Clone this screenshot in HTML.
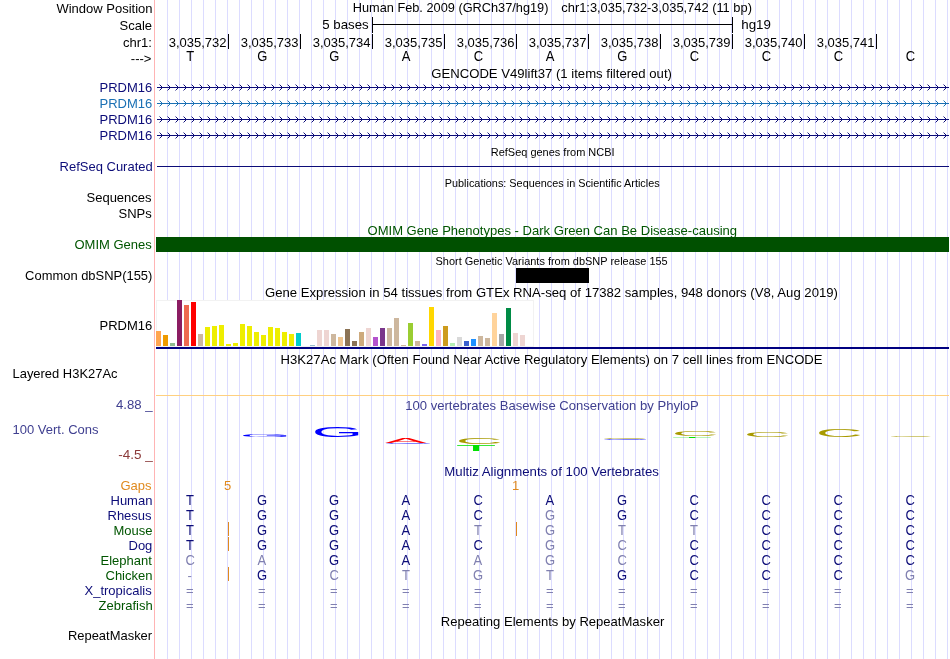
<!DOCTYPE html>
<html><head><meta charset="utf-8"><style>
html,body{margin:0;padding:0;background:#fff;width:950px;height:659px;overflow:hidden}
svg{display:block;will-change:transform;font-family:"Liberation Sans",sans-serif}
</style></head><body>
<svg width="950" height="659" viewBox="0 0 950 659">
<rect x="0" y="0" width="950" height="659" fill="#fff"/>
<rect x="167" y="0" width="1" height="659" fill="#dcdcff"/>
<rect x="179" y="0" width="1" height="659" fill="#dcdcff"/>
<rect x="191" y="0" width="1" height="659" fill="#dcdcff"/>
<rect x="203" y="0" width="1" height="659" fill="#dcdcff"/>
<rect x="215" y="0" width="1" height="659" fill="#dcdcff"/>
<rect x="227" y="0" width="1" height="659" fill="#dcdcff"/>
<rect x="239" y="0" width="1" height="659" fill="#dcdcff"/>
<rect x="251" y="0" width="1" height="659" fill="#dcdcff"/>
<rect x="263" y="0" width="1" height="659" fill="#dcdcff"/>
<rect x="275" y="0" width="1" height="659" fill="#dcdcff"/>
<rect x="287" y="0" width="1" height="659" fill="#dcdcff"/>
<rect x="299" y="0" width="1" height="659" fill="#dcdcff"/>
<rect x="311" y="0" width="1" height="659" fill="#dcdcff"/>
<rect x="323" y="0" width="1" height="659" fill="#dcdcff"/>
<rect x="335" y="0" width="1" height="659" fill="#dcdcff"/>
<rect x="347" y="0" width="1" height="659" fill="#dcdcff"/>
<rect x="359" y="0" width="1" height="659" fill="#dcdcff"/>
<rect x="371" y="0" width="1" height="659" fill="#dcdcff"/>
<rect x="383" y="0" width="1" height="659" fill="#dcdcff"/>
<rect x="395" y="0" width="1" height="659" fill="#dcdcff"/>
<rect x="407" y="0" width="1" height="659" fill="#dcdcff"/>
<rect x="419" y="0" width="1" height="659" fill="#dcdcff"/>
<rect x="431" y="0" width="1" height="659" fill="#dcdcff"/>
<rect x="443" y="0" width="1" height="659" fill="#dcdcff"/>
<rect x="455" y="0" width="1" height="659" fill="#dcdcff"/>
<rect x="467" y="0" width="1" height="659" fill="#dcdcff"/>
<rect x="479" y="0" width="1" height="659" fill="#dcdcff"/>
<rect x="491" y="0" width="1" height="659" fill="#dcdcff"/>
<rect x="503" y="0" width="1" height="659" fill="#dcdcff"/>
<rect x="515" y="0" width="1" height="659" fill="#dcdcff"/>
<rect x="527" y="0" width="1" height="659" fill="#dcdcff"/>
<rect x="539" y="0" width="1" height="659" fill="#dcdcff"/>
<rect x="551" y="0" width="1" height="659" fill="#dcdcff"/>
<rect x="563" y="0" width="1" height="659" fill="#dcdcff"/>
<rect x="575" y="0" width="1" height="659" fill="#dcdcff"/>
<rect x="587" y="0" width="1" height="659" fill="#dcdcff"/>
<rect x="599" y="0" width="1" height="659" fill="#dcdcff"/>
<rect x="611" y="0" width="1" height="659" fill="#dcdcff"/>
<rect x="623" y="0" width="1" height="659" fill="#dcdcff"/>
<rect x="635" y="0" width="1" height="659" fill="#dcdcff"/>
<rect x="647" y="0" width="1" height="659" fill="#dcdcff"/>
<rect x="659" y="0" width="1" height="659" fill="#dcdcff"/>
<rect x="671" y="0" width="1" height="659" fill="#dcdcff"/>
<rect x="683" y="0" width="1" height="659" fill="#dcdcff"/>
<rect x="695" y="0" width="1" height="659" fill="#dcdcff"/>
<rect x="707" y="0" width="1" height="659" fill="#dcdcff"/>
<rect x="719" y="0" width="1" height="659" fill="#dcdcff"/>
<rect x="731" y="0" width="1" height="659" fill="#dcdcff"/>
<rect x="743" y="0" width="1" height="659" fill="#dcdcff"/>
<rect x="755" y="0" width="1" height="659" fill="#dcdcff"/>
<rect x="767" y="0" width="1" height="659" fill="#dcdcff"/>
<rect x="779" y="0" width="1" height="659" fill="#dcdcff"/>
<rect x="791" y="0" width="1" height="659" fill="#dcdcff"/>
<rect x="803" y="0" width="1" height="659" fill="#dcdcff"/>
<rect x="815" y="0" width="1" height="659" fill="#dcdcff"/>
<rect x="827" y="0" width="1" height="659" fill="#dcdcff"/>
<rect x="839" y="0" width="1" height="659" fill="#dcdcff"/>
<rect x="851" y="0" width="1" height="659" fill="#dcdcff"/>
<rect x="863" y="0" width="1" height="659" fill="#dcdcff"/>
<rect x="875" y="0" width="1" height="659" fill="#dcdcff"/>
<rect x="887" y="0" width="1" height="659" fill="#dcdcff"/>
<rect x="899" y="0" width="1" height="659" fill="#dcdcff"/>
<rect x="911" y="0" width="1" height="659" fill="#dcdcff"/>
<rect x="923" y="0" width="1" height="659" fill="#dcdcff"/>
<rect x="935" y="0" width="1" height="659" fill="#dcdcff"/>
<rect x="947" y="0" width="1" height="659" fill="#dcdcff"/>
<rect x="154" y="0" width="1" height="659" fill="#ffb4b4"/>
<text x="56.40" y="13" fill="#000" font-size="13" textLength="96.21" lengthAdjust="spacingAndGlyphs">Window Position</text>
<text x="119.50" y="30" fill="#000" font-size="13">Scale</text>
<text x="123.00" y="47" fill="#000" font-size="13">chr1:</text>
<text x="130.80" y="63" fill="#000" font-size="13">---&gt;</text>
<text x="352.72" y="12" fill="#000" font-size="13" textLength="195.73" lengthAdjust="spacingAndGlyphs">Human Feb. 2009 (GRCh37/hg19)</text>
<text x="561.30" y="12" fill="#000" font-size="13" textLength="190.63" lengthAdjust="spacingAndGlyphs">chr1:3,035,732-3,035,742 (11 bp)</text>
<rect x="372" y="17" width="1" height="16" fill="#000"/>
<rect x="732" y="17" width="1" height="16" fill="#000"/>
<rect x="372" y="24" width="361" height="1" fill="#000"/>
<text x="322.28" y="29" fill="#000" font-size="13" textLength="46.38" lengthAdjust="spacingAndGlyphs">5 bases</text>
<text x="741.27" y="29" fill="#000" font-size="13" textLength="29.67" lengthAdjust="spacingAndGlyphs">hg19</text>
<rect x="228" y="34" width="1" height="15" fill="#000"/>
<text x="168.70" y="47" fill="#000" font-size="13">3,035,732</text>
<rect x="300" y="34" width="1" height="15" fill="#000"/>
<text x="240.70" y="47" fill="#000" font-size="13">3,035,733</text>
<rect x="372" y="34" width="1" height="15" fill="#000"/>
<text x="312.70" y="47" fill="#000" font-size="13">3,035,734</text>
<rect x="444" y="34" width="1" height="15" fill="#000"/>
<text x="384.70" y="47" fill="#000" font-size="13">3,035,735</text>
<rect x="516" y="34" width="1" height="15" fill="#000"/>
<text x="456.70" y="47" fill="#000" font-size="13">3,035,736</text>
<rect x="588" y="34" width="1" height="15" fill="#000"/>
<text x="528.70" y="47" fill="#000" font-size="13">3,035,737</text>
<rect x="660" y="34" width="1" height="15" fill="#000"/>
<text x="600.70" y="47" fill="#000" font-size="13">3,035,738</text>
<rect x="732" y="34" width="1" height="15" fill="#000"/>
<text x="672.70" y="47" fill="#000" font-size="13">3,035,739</text>
<rect x="804" y="34" width="1" height="15" fill="#000"/>
<text x="744.70" y="47" fill="#000" font-size="13">3,035,740</text>
<rect x="876" y="34" width="1" height="15" fill="#000"/>
<text x="816.70" y="47" fill="#000" font-size="13">3,035,741</text>
<text x="186.30" y="61" fill="#000" font-size="13" transform="matrix(1,0,0,1.1,0,-6.10)">T</text>
<text x="257.30" y="61" fill="#000" font-size="13" transform="matrix(1,0,0,1.1,0,-6.10)">G</text>
<text x="329.30" y="61" fill="#000" font-size="13" transform="matrix(1,0,0,1.1,0,-6.10)">G</text>
<text x="401.80" y="61" fill="#000" font-size="13" transform="matrix(1,0,0,1.1,0,-6.10)">A</text>
<text x="473.80" y="61" fill="#000" font-size="13" transform="matrix(1,0,0,1.1,0,-6.10)">C</text>
<text x="545.80" y="61" fill="#000" font-size="13" transform="matrix(1,0,0,1.1,0,-6.10)">A</text>
<text x="617.30" y="61" fill="#000" font-size="13" transform="matrix(1,0,0,1.1,0,-6.10)">G</text>
<text x="689.80" y="61" fill="#000" font-size="13" transform="matrix(1,0,0,1.1,0,-6.10)">C</text>
<text x="761.80" y="61" fill="#000" font-size="13" transform="matrix(1,0,0,1.1,0,-6.10)">C</text>
<text x="833.80" y="61" fill="#000" font-size="13" transform="matrix(1,0,0,1.1,0,-6.10)">C</text>
<text x="905.80" y="61" fill="#000" font-size="13" transform="matrix(1,0,0,1.1,0,-6.10)">C</text>
<text x="431.29" y="78" fill="#000" font-size="13" textLength="240.64" lengthAdjust="spacingAndGlyphs">GENCODE V49lift37 (1 items filtered out)</text>
<rect x="157" y="87" width="792" height="1" fill="#0c0c78"/>
<path d="M160,85h1v1h-1zM161,86h1v3h-1zM160,89h1v1h-1zM168,85h1v1h-1zM169,86h1v3h-1zM168,89h1v1h-1zM176,85h1v1h-1zM177,86h1v3h-1zM176,89h1v1h-1zM184,85h1v1h-1zM185,86h1v3h-1zM184,89h1v1h-1zM192,85h1v1h-1zM193,86h1v3h-1zM192,89h1v1h-1zM200,85h1v1h-1zM201,86h1v3h-1zM200,89h1v1h-1zM208,85h1v1h-1zM209,86h1v3h-1zM208,89h1v1h-1zM216,85h1v1h-1zM217,86h1v3h-1zM216,89h1v1h-1zM224,85h1v1h-1zM225,86h1v3h-1zM224,89h1v1h-1zM232,85h1v1h-1zM233,86h1v3h-1zM232,89h1v1h-1zM240,85h1v1h-1zM241,86h1v3h-1zM240,89h1v1h-1zM248,85h1v1h-1zM249,86h1v3h-1zM248,89h1v1h-1zM256,85h1v1h-1zM257,86h1v3h-1zM256,89h1v1h-1zM264,85h1v1h-1zM265,86h1v3h-1zM264,89h1v1h-1zM272,85h1v1h-1zM273,86h1v3h-1zM272,89h1v1h-1zM280,85h1v1h-1zM281,86h1v3h-1zM280,89h1v1h-1zM288,85h1v1h-1zM289,86h1v3h-1zM288,89h1v1h-1zM296,85h1v1h-1zM297,86h1v3h-1zM296,89h1v1h-1zM304,85h1v1h-1zM305,86h1v3h-1zM304,89h1v1h-1zM312,85h1v1h-1zM313,86h1v3h-1zM312,89h1v1h-1zM320,85h1v1h-1zM321,86h1v3h-1zM320,89h1v1h-1zM328,85h1v1h-1zM329,86h1v3h-1zM328,89h1v1h-1zM336,85h1v1h-1zM337,86h1v3h-1zM336,89h1v1h-1zM344,85h1v1h-1zM345,86h1v3h-1zM344,89h1v1h-1zM352,85h1v1h-1zM353,86h1v3h-1zM352,89h1v1h-1zM360,85h1v1h-1zM361,86h1v3h-1zM360,89h1v1h-1zM368,85h1v1h-1zM369,86h1v3h-1zM368,89h1v1h-1zM376,85h1v1h-1zM377,86h1v3h-1zM376,89h1v1h-1zM384,85h1v1h-1zM385,86h1v3h-1zM384,89h1v1h-1zM392,85h1v1h-1zM393,86h1v3h-1zM392,89h1v1h-1zM400,85h1v1h-1zM401,86h1v3h-1zM400,89h1v1h-1zM408,85h1v1h-1zM409,86h1v3h-1zM408,89h1v1h-1zM416,85h1v1h-1zM417,86h1v3h-1zM416,89h1v1h-1zM424,85h1v1h-1zM425,86h1v3h-1zM424,89h1v1h-1zM432,85h1v1h-1zM433,86h1v3h-1zM432,89h1v1h-1zM440,85h1v1h-1zM441,86h1v3h-1zM440,89h1v1h-1zM448,85h1v1h-1zM449,86h1v3h-1zM448,89h1v1h-1zM456,85h1v1h-1zM457,86h1v3h-1zM456,89h1v1h-1zM464,85h1v1h-1zM465,86h1v3h-1zM464,89h1v1h-1zM472,85h1v1h-1zM473,86h1v3h-1zM472,89h1v1h-1zM480,85h1v1h-1zM481,86h1v3h-1zM480,89h1v1h-1zM488,85h1v1h-1zM489,86h1v3h-1zM488,89h1v1h-1zM496,85h1v1h-1zM497,86h1v3h-1zM496,89h1v1h-1zM504,85h1v1h-1zM505,86h1v3h-1zM504,89h1v1h-1zM512,85h1v1h-1zM513,86h1v3h-1zM512,89h1v1h-1zM520,85h1v1h-1zM521,86h1v3h-1zM520,89h1v1h-1zM528,85h1v1h-1zM529,86h1v3h-1zM528,89h1v1h-1zM536,85h1v1h-1zM537,86h1v3h-1zM536,89h1v1h-1zM544,85h1v1h-1zM545,86h1v3h-1zM544,89h1v1h-1zM552,85h1v1h-1zM553,86h1v3h-1zM552,89h1v1h-1zM560,85h1v1h-1zM561,86h1v3h-1zM560,89h1v1h-1zM568,85h1v1h-1zM569,86h1v3h-1zM568,89h1v1h-1zM576,85h1v1h-1zM577,86h1v3h-1zM576,89h1v1h-1zM584,85h1v1h-1zM585,86h1v3h-1zM584,89h1v1h-1zM592,85h1v1h-1zM593,86h1v3h-1zM592,89h1v1h-1zM600,85h1v1h-1zM601,86h1v3h-1zM600,89h1v1h-1zM608,85h1v1h-1zM609,86h1v3h-1zM608,89h1v1h-1zM616,85h1v1h-1zM617,86h1v3h-1zM616,89h1v1h-1zM624,85h1v1h-1zM625,86h1v3h-1zM624,89h1v1h-1zM632,85h1v1h-1zM633,86h1v3h-1zM632,89h1v1h-1zM640,85h1v1h-1zM641,86h1v3h-1zM640,89h1v1h-1zM648,85h1v1h-1zM649,86h1v3h-1zM648,89h1v1h-1zM656,85h1v1h-1zM657,86h1v3h-1zM656,89h1v1h-1zM664,85h1v1h-1zM665,86h1v3h-1zM664,89h1v1h-1zM672,85h1v1h-1zM673,86h1v3h-1zM672,89h1v1h-1zM680,85h1v1h-1zM681,86h1v3h-1zM680,89h1v1h-1zM688,85h1v1h-1zM689,86h1v3h-1zM688,89h1v1h-1zM696,85h1v1h-1zM697,86h1v3h-1zM696,89h1v1h-1zM704,85h1v1h-1zM705,86h1v3h-1zM704,89h1v1h-1zM712,85h1v1h-1zM713,86h1v3h-1zM712,89h1v1h-1zM720,85h1v1h-1zM721,86h1v3h-1zM720,89h1v1h-1zM728,85h1v1h-1zM729,86h1v3h-1zM728,89h1v1h-1zM736,85h1v1h-1zM737,86h1v3h-1zM736,89h1v1h-1zM744,85h1v1h-1zM745,86h1v3h-1zM744,89h1v1h-1zM752,85h1v1h-1zM753,86h1v3h-1zM752,89h1v1h-1zM760,85h1v1h-1zM761,86h1v3h-1zM760,89h1v1h-1zM768,85h1v1h-1zM769,86h1v3h-1zM768,89h1v1h-1zM776,85h1v1h-1zM777,86h1v3h-1zM776,89h1v1h-1zM784,85h1v1h-1zM785,86h1v3h-1zM784,89h1v1h-1zM792,85h1v1h-1zM793,86h1v3h-1zM792,89h1v1h-1zM800,85h1v1h-1zM801,86h1v3h-1zM800,89h1v1h-1zM808,85h1v1h-1zM809,86h1v3h-1zM808,89h1v1h-1zM816,85h1v1h-1zM817,86h1v3h-1zM816,89h1v1h-1zM824,85h1v1h-1zM825,86h1v3h-1zM824,89h1v1h-1zM832,85h1v1h-1zM833,86h1v3h-1zM832,89h1v1h-1zM840,85h1v1h-1zM841,86h1v3h-1zM840,89h1v1h-1zM848,85h1v1h-1zM849,86h1v3h-1zM848,89h1v1h-1zM856,85h1v1h-1zM857,86h1v3h-1zM856,89h1v1h-1zM864,85h1v1h-1zM865,86h1v3h-1zM864,89h1v1h-1zM872,85h1v1h-1zM873,86h1v3h-1zM872,89h1v1h-1zM880,85h1v1h-1zM881,86h1v3h-1zM880,89h1v1h-1zM888,85h1v1h-1zM889,86h1v3h-1zM888,89h1v1h-1zM896,85h1v1h-1zM897,86h1v3h-1zM896,89h1v1h-1zM904,85h1v1h-1zM905,86h1v3h-1zM904,89h1v1h-1zM912,85h1v1h-1zM913,86h1v3h-1zM912,89h1v1h-1zM920,85h1v1h-1zM921,86h1v3h-1zM920,89h1v1h-1zM928,85h1v1h-1zM929,86h1v3h-1zM928,89h1v1h-1zM936,85h1v1h-1zM937,86h1v3h-1zM936,89h1v1h-1zM944,85h1v1h-1zM945,86h1v3h-1zM944,89h1v1h-1z" fill="#0c0c78"/>
<path d="M159,84h1v1h-1zM159,90h1v1h-1zM167,84h1v1h-1zM167,90h1v1h-1zM175,84h1v1h-1zM175,90h1v1h-1zM183,84h1v1h-1zM183,90h1v1h-1zM191,84h1v1h-1zM191,90h1v1h-1zM199,84h1v1h-1zM199,90h1v1h-1zM207,84h1v1h-1zM207,90h1v1h-1zM215,84h1v1h-1zM215,90h1v1h-1zM223,84h1v1h-1zM223,90h1v1h-1zM231,84h1v1h-1zM231,90h1v1h-1zM239,84h1v1h-1zM239,90h1v1h-1zM247,84h1v1h-1zM247,90h1v1h-1zM255,84h1v1h-1zM255,90h1v1h-1zM263,84h1v1h-1zM263,90h1v1h-1zM271,84h1v1h-1zM271,90h1v1h-1zM279,84h1v1h-1zM279,90h1v1h-1zM287,84h1v1h-1zM287,90h1v1h-1zM295,84h1v1h-1zM295,90h1v1h-1zM303,84h1v1h-1zM303,90h1v1h-1zM311,84h1v1h-1zM311,90h1v1h-1zM319,84h1v1h-1zM319,90h1v1h-1zM327,84h1v1h-1zM327,90h1v1h-1zM335,84h1v1h-1zM335,90h1v1h-1zM343,84h1v1h-1zM343,90h1v1h-1zM351,84h1v1h-1zM351,90h1v1h-1zM359,84h1v1h-1zM359,90h1v1h-1zM367,84h1v1h-1zM367,90h1v1h-1zM375,84h1v1h-1zM375,90h1v1h-1zM383,84h1v1h-1zM383,90h1v1h-1zM391,84h1v1h-1zM391,90h1v1h-1zM399,84h1v1h-1zM399,90h1v1h-1zM407,84h1v1h-1zM407,90h1v1h-1zM415,84h1v1h-1zM415,90h1v1h-1zM423,84h1v1h-1zM423,90h1v1h-1zM431,84h1v1h-1zM431,90h1v1h-1zM439,84h1v1h-1zM439,90h1v1h-1zM447,84h1v1h-1zM447,90h1v1h-1zM455,84h1v1h-1zM455,90h1v1h-1zM463,84h1v1h-1zM463,90h1v1h-1zM471,84h1v1h-1zM471,90h1v1h-1zM479,84h1v1h-1zM479,90h1v1h-1zM487,84h1v1h-1zM487,90h1v1h-1zM495,84h1v1h-1zM495,90h1v1h-1zM503,84h1v1h-1zM503,90h1v1h-1zM511,84h1v1h-1zM511,90h1v1h-1zM519,84h1v1h-1zM519,90h1v1h-1zM527,84h1v1h-1zM527,90h1v1h-1zM535,84h1v1h-1zM535,90h1v1h-1zM543,84h1v1h-1zM543,90h1v1h-1zM551,84h1v1h-1zM551,90h1v1h-1zM559,84h1v1h-1zM559,90h1v1h-1zM567,84h1v1h-1zM567,90h1v1h-1zM575,84h1v1h-1zM575,90h1v1h-1zM583,84h1v1h-1zM583,90h1v1h-1zM591,84h1v1h-1zM591,90h1v1h-1zM599,84h1v1h-1zM599,90h1v1h-1zM607,84h1v1h-1zM607,90h1v1h-1zM615,84h1v1h-1zM615,90h1v1h-1zM623,84h1v1h-1zM623,90h1v1h-1zM631,84h1v1h-1zM631,90h1v1h-1zM639,84h1v1h-1zM639,90h1v1h-1zM647,84h1v1h-1zM647,90h1v1h-1zM655,84h1v1h-1zM655,90h1v1h-1zM663,84h1v1h-1zM663,90h1v1h-1zM671,84h1v1h-1zM671,90h1v1h-1zM679,84h1v1h-1zM679,90h1v1h-1zM687,84h1v1h-1zM687,90h1v1h-1zM695,84h1v1h-1zM695,90h1v1h-1zM703,84h1v1h-1zM703,90h1v1h-1zM711,84h1v1h-1zM711,90h1v1h-1zM719,84h1v1h-1zM719,90h1v1h-1zM727,84h1v1h-1zM727,90h1v1h-1zM735,84h1v1h-1zM735,90h1v1h-1zM743,84h1v1h-1zM743,90h1v1h-1zM751,84h1v1h-1zM751,90h1v1h-1zM759,84h1v1h-1zM759,90h1v1h-1zM767,84h1v1h-1zM767,90h1v1h-1zM775,84h1v1h-1zM775,90h1v1h-1zM783,84h1v1h-1zM783,90h1v1h-1zM791,84h1v1h-1zM791,90h1v1h-1zM799,84h1v1h-1zM799,90h1v1h-1zM807,84h1v1h-1zM807,90h1v1h-1zM815,84h1v1h-1zM815,90h1v1h-1zM823,84h1v1h-1zM823,90h1v1h-1zM831,84h1v1h-1zM831,90h1v1h-1zM839,84h1v1h-1zM839,90h1v1h-1zM847,84h1v1h-1zM847,90h1v1h-1zM855,84h1v1h-1zM855,90h1v1h-1zM863,84h1v1h-1zM863,90h1v1h-1zM871,84h1v1h-1zM871,90h1v1h-1zM879,84h1v1h-1zM879,90h1v1h-1zM887,84h1v1h-1zM887,90h1v1h-1zM895,84h1v1h-1zM895,90h1v1h-1zM903,84h1v1h-1zM903,90h1v1h-1zM911,84h1v1h-1zM911,90h1v1h-1zM919,84h1v1h-1zM919,90h1v1h-1zM927,84h1v1h-1zM927,90h1v1h-1zM935,84h1v1h-1zM935,90h1v1h-1zM943,84h1v1h-1zM943,90h1v1h-1z" fill="#0c0c78" fill-opacity="0.45"/>
<text x="99.50" y="92" fill="#0c0c78" font-size="13">PRDM16</text>
<rect x="157" y="103" width="792" height="1" fill="#1a70b4"/>
<path d="M160,101h1v1h-1zM161,102h1v3h-1zM160,105h1v1h-1zM168,101h1v1h-1zM169,102h1v3h-1zM168,105h1v1h-1zM176,101h1v1h-1zM177,102h1v3h-1zM176,105h1v1h-1zM184,101h1v1h-1zM185,102h1v3h-1zM184,105h1v1h-1zM192,101h1v1h-1zM193,102h1v3h-1zM192,105h1v1h-1zM200,101h1v1h-1zM201,102h1v3h-1zM200,105h1v1h-1zM208,101h1v1h-1zM209,102h1v3h-1zM208,105h1v1h-1zM216,101h1v1h-1zM217,102h1v3h-1zM216,105h1v1h-1zM224,101h1v1h-1zM225,102h1v3h-1zM224,105h1v1h-1zM232,101h1v1h-1zM233,102h1v3h-1zM232,105h1v1h-1zM240,101h1v1h-1zM241,102h1v3h-1zM240,105h1v1h-1zM248,101h1v1h-1zM249,102h1v3h-1zM248,105h1v1h-1zM256,101h1v1h-1zM257,102h1v3h-1zM256,105h1v1h-1zM264,101h1v1h-1zM265,102h1v3h-1zM264,105h1v1h-1zM272,101h1v1h-1zM273,102h1v3h-1zM272,105h1v1h-1zM280,101h1v1h-1zM281,102h1v3h-1zM280,105h1v1h-1zM288,101h1v1h-1zM289,102h1v3h-1zM288,105h1v1h-1zM296,101h1v1h-1zM297,102h1v3h-1zM296,105h1v1h-1zM304,101h1v1h-1zM305,102h1v3h-1zM304,105h1v1h-1zM312,101h1v1h-1zM313,102h1v3h-1zM312,105h1v1h-1zM320,101h1v1h-1zM321,102h1v3h-1zM320,105h1v1h-1zM328,101h1v1h-1zM329,102h1v3h-1zM328,105h1v1h-1zM336,101h1v1h-1zM337,102h1v3h-1zM336,105h1v1h-1zM344,101h1v1h-1zM345,102h1v3h-1zM344,105h1v1h-1zM352,101h1v1h-1zM353,102h1v3h-1zM352,105h1v1h-1zM360,101h1v1h-1zM361,102h1v3h-1zM360,105h1v1h-1zM368,101h1v1h-1zM369,102h1v3h-1zM368,105h1v1h-1zM376,101h1v1h-1zM377,102h1v3h-1zM376,105h1v1h-1zM384,101h1v1h-1zM385,102h1v3h-1zM384,105h1v1h-1zM392,101h1v1h-1zM393,102h1v3h-1zM392,105h1v1h-1zM400,101h1v1h-1zM401,102h1v3h-1zM400,105h1v1h-1zM408,101h1v1h-1zM409,102h1v3h-1zM408,105h1v1h-1zM416,101h1v1h-1zM417,102h1v3h-1zM416,105h1v1h-1zM424,101h1v1h-1zM425,102h1v3h-1zM424,105h1v1h-1zM432,101h1v1h-1zM433,102h1v3h-1zM432,105h1v1h-1zM440,101h1v1h-1zM441,102h1v3h-1zM440,105h1v1h-1zM448,101h1v1h-1zM449,102h1v3h-1zM448,105h1v1h-1zM456,101h1v1h-1zM457,102h1v3h-1zM456,105h1v1h-1zM464,101h1v1h-1zM465,102h1v3h-1zM464,105h1v1h-1zM472,101h1v1h-1zM473,102h1v3h-1zM472,105h1v1h-1zM480,101h1v1h-1zM481,102h1v3h-1zM480,105h1v1h-1zM488,101h1v1h-1zM489,102h1v3h-1zM488,105h1v1h-1zM496,101h1v1h-1zM497,102h1v3h-1zM496,105h1v1h-1zM504,101h1v1h-1zM505,102h1v3h-1zM504,105h1v1h-1zM512,101h1v1h-1zM513,102h1v3h-1zM512,105h1v1h-1zM520,101h1v1h-1zM521,102h1v3h-1zM520,105h1v1h-1zM528,101h1v1h-1zM529,102h1v3h-1zM528,105h1v1h-1zM536,101h1v1h-1zM537,102h1v3h-1zM536,105h1v1h-1zM544,101h1v1h-1zM545,102h1v3h-1zM544,105h1v1h-1zM552,101h1v1h-1zM553,102h1v3h-1zM552,105h1v1h-1zM560,101h1v1h-1zM561,102h1v3h-1zM560,105h1v1h-1zM568,101h1v1h-1zM569,102h1v3h-1zM568,105h1v1h-1zM576,101h1v1h-1zM577,102h1v3h-1zM576,105h1v1h-1zM584,101h1v1h-1zM585,102h1v3h-1zM584,105h1v1h-1zM592,101h1v1h-1zM593,102h1v3h-1zM592,105h1v1h-1zM600,101h1v1h-1zM601,102h1v3h-1zM600,105h1v1h-1zM608,101h1v1h-1zM609,102h1v3h-1zM608,105h1v1h-1zM616,101h1v1h-1zM617,102h1v3h-1zM616,105h1v1h-1zM624,101h1v1h-1zM625,102h1v3h-1zM624,105h1v1h-1zM632,101h1v1h-1zM633,102h1v3h-1zM632,105h1v1h-1zM640,101h1v1h-1zM641,102h1v3h-1zM640,105h1v1h-1zM648,101h1v1h-1zM649,102h1v3h-1zM648,105h1v1h-1zM656,101h1v1h-1zM657,102h1v3h-1zM656,105h1v1h-1zM664,101h1v1h-1zM665,102h1v3h-1zM664,105h1v1h-1zM672,101h1v1h-1zM673,102h1v3h-1zM672,105h1v1h-1zM680,101h1v1h-1zM681,102h1v3h-1zM680,105h1v1h-1zM688,101h1v1h-1zM689,102h1v3h-1zM688,105h1v1h-1zM696,101h1v1h-1zM697,102h1v3h-1zM696,105h1v1h-1zM704,101h1v1h-1zM705,102h1v3h-1zM704,105h1v1h-1zM712,101h1v1h-1zM713,102h1v3h-1zM712,105h1v1h-1zM720,101h1v1h-1zM721,102h1v3h-1zM720,105h1v1h-1zM728,101h1v1h-1zM729,102h1v3h-1zM728,105h1v1h-1zM736,101h1v1h-1zM737,102h1v3h-1zM736,105h1v1h-1zM744,101h1v1h-1zM745,102h1v3h-1zM744,105h1v1h-1zM752,101h1v1h-1zM753,102h1v3h-1zM752,105h1v1h-1zM760,101h1v1h-1zM761,102h1v3h-1zM760,105h1v1h-1zM768,101h1v1h-1zM769,102h1v3h-1zM768,105h1v1h-1zM776,101h1v1h-1zM777,102h1v3h-1zM776,105h1v1h-1zM784,101h1v1h-1zM785,102h1v3h-1zM784,105h1v1h-1zM792,101h1v1h-1zM793,102h1v3h-1zM792,105h1v1h-1zM800,101h1v1h-1zM801,102h1v3h-1zM800,105h1v1h-1zM808,101h1v1h-1zM809,102h1v3h-1zM808,105h1v1h-1zM816,101h1v1h-1zM817,102h1v3h-1zM816,105h1v1h-1zM824,101h1v1h-1zM825,102h1v3h-1zM824,105h1v1h-1zM832,101h1v1h-1zM833,102h1v3h-1zM832,105h1v1h-1zM840,101h1v1h-1zM841,102h1v3h-1zM840,105h1v1h-1zM848,101h1v1h-1zM849,102h1v3h-1zM848,105h1v1h-1zM856,101h1v1h-1zM857,102h1v3h-1zM856,105h1v1h-1zM864,101h1v1h-1zM865,102h1v3h-1zM864,105h1v1h-1zM872,101h1v1h-1zM873,102h1v3h-1zM872,105h1v1h-1zM880,101h1v1h-1zM881,102h1v3h-1zM880,105h1v1h-1zM888,101h1v1h-1zM889,102h1v3h-1zM888,105h1v1h-1zM896,101h1v1h-1zM897,102h1v3h-1zM896,105h1v1h-1zM904,101h1v1h-1zM905,102h1v3h-1zM904,105h1v1h-1zM912,101h1v1h-1zM913,102h1v3h-1zM912,105h1v1h-1zM920,101h1v1h-1zM921,102h1v3h-1zM920,105h1v1h-1zM928,101h1v1h-1zM929,102h1v3h-1zM928,105h1v1h-1zM936,101h1v1h-1zM937,102h1v3h-1zM936,105h1v1h-1zM944,101h1v1h-1zM945,102h1v3h-1zM944,105h1v1h-1z" fill="#1a70b4"/>
<path d="M159,100h1v1h-1zM159,106h1v1h-1zM167,100h1v1h-1zM167,106h1v1h-1zM175,100h1v1h-1zM175,106h1v1h-1zM183,100h1v1h-1zM183,106h1v1h-1zM191,100h1v1h-1zM191,106h1v1h-1zM199,100h1v1h-1zM199,106h1v1h-1zM207,100h1v1h-1zM207,106h1v1h-1zM215,100h1v1h-1zM215,106h1v1h-1zM223,100h1v1h-1zM223,106h1v1h-1zM231,100h1v1h-1zM231,106h1v1h-1zM239,100h1v1h-1zM239,106h1v1h-1zM247,100h1v1h-1zM247,106h1v1h-1zM255,100h1v1h-1zM255,106h1v1h-1zM263,100h1v1h-1zM263,106h1v1h-1zM271,100h1v1h-1zM271,106h1v1h-1zM279,100h1v1h-1zM279,106h1v1h-1zM287,100h1v1h-1zM287,106h1v1h-1zM295,100h1v1h-1zM295,106h1v1h-1zM303,100h1v1h-1zM303,106h1v1h-1zM311,100h1v1h-1zM311,106h1v1h-1zM319,100h1v1h-1zM319,106h1v1h-1zM327,100h1v1h-1zM327,106h1v1h-1zM335,100h1v1h-1zM335,106h1v1h-1zM343,100h1v1h-1zM343,106h1v1h-1zM351,100h1v1h-1zM351,106h1v1h-1zM359,100h1v1h-1zM359,106h1v1h-1zM367,100h1v1h-1zM367,106h1v1h-1zM375,100h1v1h-1zM375,106h1v1h-1zM383,100h1v1h-1zM383,106h1v1h-1zM391,100h1v1h-1zM391,106h1v1h-1zM399,100h1v1h-1zM399,106h1v1h-1zM407,100h1v1h-1zM407,106h1v1h-1zM415,100h1v1h-1zM415,106h1v1h-1zM423,100h1v1h-1zM423,106h1v1h-1zM431,100h1v1h-1zM431,106h1v1h-1zM439,100h1v1h-1zM439,106h1v1h-1zM447,100h1v1h-1zM447,106h1v1h-1zM455,100h1v1h-1zM455,106h1v1h-1zM463,100h1v1h-1zM463,106h1v1h-1zM471,100h1v1h-1zM471,106h1v1h-1zM479,100h1v1h-1zM479,106h1v1h-1zM487,100h1v1h-1zM487,106h1v1h-1zM495,100h1v1h-1zM495,106h1v1h-1zM503,100h1v1h-1zM503,106h1v1h-1zM511,100h1v1h-1zM511,106h1v1h-1zM519,100h1v1h-1zM519,106h1v1h-1zM527,100h1v1h-1zM527,106h1v1h-1zM535,100h1v1h-1zM535,106h1v1h-1zM543,100h1v1h-1zM543,106h1v1h-1zM551,100h1v1h-1zM551,106h1v1h-1zM559,100h1v1h-1zM559,106h1v1h-1zM567,100h1v1h-1zM567,106h1v1h-1zM575,100h1v1h-1zM575,106h1v1h-1zM583,100h1v1h-1zM583,106h1v1h-1zM591,100h1v1h-1zM591,106h1v1h-1zM599,100h1v1h-1zM599,106h1v1h-1zM607,100h1v1h-1zM607,106h1v1h-1zM615,100h1v1h-1zM615,106h1v1h-1zM623,100h1v1h-1zM623,106h1v1h-1zM631,100h1v1h-1zM631,106h1v1h-1zM639,100h1v1h-1zM639,106h1v1h-1zM647,100h1v1h-1zM647,106h1v1h-1zM655,100h1v1h-1zM655,106h1v1h-1zM663,100h1v1h-1zM663,106h1v1h-1zM671,100h1v1h-1zM671,106h1v1h-1zM679,100h1v1h-1zM679,106h1v1h-1zM687,100h1v1h-1zM687,106h1v1h-1zM695,100h1v1h-1zM695,106h1v1h-1zM703,100h1v1h-1zM703,106h1v1h-1zM711,100h1v1h-1zM711,106h1v1h-1zM719,100h1v1h-1zM719,106h1v1h-1zM727,100h1v1h-1zM727,106h1v1h-1zM735,100h1v1h-1zM735,106h1v1h-1zM743,100h1v1h-1zM743,106h1v1h-1zM751,100h1v1h-1zM751,106h1v1h-1zM759,100h1v1h-1zM759,106h1v1h-1zM767,100h1v1h-1zM767,106h1v1h-1zM775,100h1v1h-1zM775,106h1v1h-1zM783,100h1v1h-1zM783,106h1v1h-1zM791,100h1v1h-1zM791,106h1v1h-1zM799,100h1v1h-1zM799,106h1v1h-1zM807,100h1v1h-1zM807,106h1v1h-1zM815,100h1v1h-1zM815,106h1v1h-1zM823,100h1v1h-1zM823,106h1v1h-1zM831,100h1v1h-1zM831,106h1v1h-1zM839,100h1v1h-1zM839,106h1v1h-1zM847,100h1v1h-1zM847,106h1v1h-1zM855,100h1v1h-1zM855,106h1v1h-1zM863,100h1v1h-1zM863,106h1v1h-1zM871,100h1v1h-1zM871,106h1v1h-1zM879,100h1v1h-1zM879,106h1v1h-1zM887,100h1v1h-1zM887,106h1v1h-1zM895,100h1v1h-1zM895,106h1v1h-1zM903,100h1v1h-1zM903,106h1v1h-1zM911,100h1v1h-1zM911,106h1v1h-1zM919,100h1v1h-1zM919,106h1v1h-1zM927,100h1v1h-1zM927,106h1v1h-1zM935,100h1v1h-1zM935,106h1v1h-1zM943,100h1v1h-1zM943,106h1v1h-1z" fill="#1a70b4" fill-opacity="0.45"/>
<text x="99.50" y="108" fill="#1a70b4" font-size="13">PRDM16</text>
<rect x="157" y="119" width="792" height="1" fill="#0c0c78"/>
<path d="M160,117h1v1h-1zM161,118h1v3h-1zM160,121h1v1h-1zM168,117h1v1h-1zM169,118h1v3h-1zM168,121h1v1h-1zM176,117h1v1h-1zM177,118h1v3h-1zM176,121h1v1h-1zM184,117h1v1h-1zM185,118h1v3h-1zM184,121h1v1h-1zM192,117h1v1h-1zM193,118h1v3h-1zM192,121h1v1h-1zM200,117h1v1h-1zM201,118h1v3h-1zM200,121h1v1h-1zM208,117h1v1h-1zM209,118h1v3h-1zM208,121h1v1h-1zM216,117h1v1h-1zM217,118h1v3h-1zM216,121h1v1h-1zM224,117h1v1h-1zM225,118h1v3h-1zM224,121h1v1h-1zM232,117h1v1h-1zM233,118h1v3h-1zM232,121h1v1h-1zM240,117h1v1h-1zM241,118h1v3h-1zM240,121h1v1h-1zM248,117h1v1h-1zM249,118h1v3h-1zM248,121h1v1h-1zM256,117h1v1h-1zM257,118h1v3h-1zM256,121h1v1h-1zM264,117h1v1h-1zM265,118h1v3h-1zM264,121h1v1h-1zM272,117h1v1h-1zM273,118h1v3h-1zM272,121h1v1h-1zM280,117h1v1h-1zM281,118h1v3h-1zM280,121h1v1h-1zM288,117h1v1h-1zM289,118h1v3h-1zM288,121h1v1h-1zM296,117h1v1h-1zM297,118h1v3h-1zM296,121h1v1h-1zM304,117h1v1h-1zM305,118h1v3h-1zM304,121h1v1h-1zM312,117h1v1h-1zM313,118h1v3h-1zM312,121h1v1h-1zM320,117h1v1h-1zM321,118h1v3h-1zM320,121h1v1h-1zM328,117h1v1h-1zM329,118h1v3h-1zM328,121h1v1h-1zM336,117h1v1h-1zM337,118h1v3h-1zM336,121h1v1h-1zM344,117h1v1h-1zM345,118h1v3h-1zM344,121h1v1h-1zM352,117h1v1h-1zM353,118h1v3h-1zM352,121h1v1h-1zM360,117h1v1h-1zM361,118h1v3h-1zM360,121h1v1h-1zM368,117h1v1h-1zM369,118h1v3h-1zM368,121h1v1h-1zM376,117h1v1h-1zM377,118h1v3h-1zM376,121h1v1h-1zM384,117h1v1h-1zM385,118h1v3h-1zM384,121h1v1h-1zM392,117h1v1h-1zM393,118h1v3h-1zM392,121h1v1h-1zM400,117h1v1h-1zM401,118h1v3h-1zM400,121h1v1h-1zM408,117h1v1h-1zM409,118h1v3h-1zM408,121h1v1h-1zM416,117h1v1h-1zM417,118h1v3h-1zM416,121h1v1h-1zM424,117h1v1h-1zM425,118h1v3h-1zM424,121h1v1h-1zM432,117h1v1h-1zM433,118h1v3h-1zM432,121h1v1h-1zM440,117h1v1h-1zM441,118h1v3h-1zM440,121h1v1h-1zM448,117h1v1h-1zM449,118h1v3h-1zM448,121h1v1h-1zM456,117h1v1h-1zM457,118h1v3h-1zM456,121h1v1h-1zM464,117h1v1h-1zM465,118h1v3h-1zM464,121h1v1h-1zM472,117h1v1h-1zM473,118h1v3h-1zM472,121h1v1h-1zM480,117h1v1h-1zM481,118h1v3h-1zM480,121h1v1h-1zM488,117h1v1h-1zM489,118h1v3h-1zM488,121h1v1h-1zM496,117h1v1h-1zM497,118h1v3h-1zM496,121h1v1h-1zM504,117h1v1h-1zM505,118h1v3h-1zM504,121h1v1h-1zM512,117h1v1h-1zM513,118h1v3h-1zM512,121h1v1h-1zM520,117h1v1h-1zM521,118h1v3h-1zM520,121h1v1h-1zM528,117h1v1h-1zM529,118h1v3h-1zM528,121h1v1h-1zM536,117h1v1h-1zM537,118h1v3h-1zM536,121h1v1h-1zM544,117h1v1h-1zM545,118h1v3h-1zM544,121h1v1h-1zM552,117h1v1h-1zM553,118h1v3h-1zM552,121h1v1h-1zM560,117h1v1h-1zM561,118h1v3h-1zM560,121h1v1h-1zM568,117h1v1h-1zM569,118h1v3h-1zM568,121h1v1h-1zM576,117h1v1h-1zM577,118h1v3h-1zM576,121h1v1h-1zM584,117h1v1h-1zM585,118h1v3h-1zM584,121h1v1h-1zM592,117h1v1h-1zM593,118h1v3h-1zM592,121h1v1h-1zM600,117h1v1h-1zM601,118h1v3h-1zM600,121h1v1h-1zM608,117h1v1h-1zM609,118h1v3h-1zM608,121h1v1h-1zM616,117h1v1h-1zM617,118h1v3h-1zM616,121h1v1h-1zM624,117h1v1h-1zM625,118h1v3h-1zM624,121h1v1h-1zM632,117h1v1h-1zM633,118h1v3h-1zM632,121h1v1h-1zM640,117h1v1h-1zM641,118h1v3h-1zM640,121h1v1h-1zM648,117h1v1h-1zM649,118h1v3h-1zM648,121h1v1h-1zM656,117h1v1h-1zM657,118h1v3h-1zM656,121h1v1h-1zM664,117h1v1h-1zM665,118h1v3h-1zM664,121h1v1h-1zM672,117h1v1h-1zM673,118h1v3h-1zM672,121h1v1h-1zM680,117h1v1h-1zM681,118h1v3h-1zM680,121h1v1h-1zM688,117h1v1h-1zM689,118h1v3h-1zM688,121h1v1h-1zM696,117h1v1h-1zM697,118h1v3h-1zM696,121h1v1h-1zM704,117h1v1h-1zM705,118h1v3h-1zM704,121h1v1h-1zM712,117h1v1h-1zM713,118h1v3h-1zM712,121h1v1h-1zM720,117h1v1h-1zM721,118h1v3h-1zM720,121h1v1h-1zM728,117h1v1h-1zM729,118h1v3h-1zM728,121h1v1h-1zM736,117h1v1h-1zM737,118h1v3h-1zM736,121h1v1h-1zM744,117h1v1h-1zM745,118h1v3h-1zM744,121h1v1h-1zM752,117h1v1h-1zM753,118h1v3h-1zM752,121h1v1h-1zM760,117h1v1h-1zM761,118h1v3h-1zM760,121h1v1h-1zM768,117h1v1h-1zM769,118h1v3h-1zM768,121h1v1h-1zM776,117h1v1h-1zM777,118h1v3h-1zM776,121h1v1h-1zM784,117h1v1h-1zM785,118h1v3h-1zM784,121h1v1h-1zM792,117h1v1h-1zM793,118h1v3h-1zM792,121h1v1h-1zM800,117h1v1h-1zM801,118h1v3h-1zM800,121h1v1h-1zM808,117h1v1h-1zM809,118h1v3h-1zM808,121h1v1h-1zM816,117h1v1h-1zM817,118h1v3h-1zM816,121h1v1h-1zM824,117h1v1h-1zM825,118h1v3h-1zM824,121h1v1h-1zM832,117h1v1h-1zM833,118h1v3h-1zM832,121h1v1h-1zM840,117h1v1h-1zM841,118h1v3h-1zM840,121h1v1h-1zM848,117h1v1h-1zM849,118h1v3h-1zM848,121h1v1h-1zM856,117h1v1h-1zM857,118h1v3h-1zM856,121h1v1h-1zM864,117h1v1h-1zM865,118h1v3h-1zM864,121h1v1h-1zM872,117h1v1h-1zM873,118h1v3h-1zM872,121h1v1h-1zM880,117h1v1h-1zM881,118h1v3h-1zM880,121h1v1h-1zM888,117h1v1h-1zM889,118h1v3h-1zM888,121h1v1h-1zM896,117h1v1h-1zM897,118h1v3h-1zM896,121h1v1h-1zM904,117h1v1h-1zM905,118h1v3h-1zM904,121h1v1h-1zM912,117h1v1h-1zM913,118h1v3h-1zM912,121h1v1h-1zM920,117h1v1h-1zM921,118h1v3h-1zM920,121h1v1h-1zM928,117h1v1h-1zM929,118h1v3h-1zM928,121h1v1h-1zM936,117h1v1h-1zM937,118h1v3h-1zM936,121h1v1h-1zM944,117h1v1h-1zM945,118h1v3h-1zM944,121h1v1h-1z" fill="#0c0c78"/>
<path d="M159,116h1v1h-1zM159,122h1v1h-1zM167,116h1v1h-1zM167,122h1v1h-1zM175,116h1v1h-1zM175,122h1v1h-1zM183,116h1v1h-1zM183,122h1v1h-1zM191,116h1v1h-1zM191,122h1v1h-1zM199,116h1v1h-1zM199,122h1v1h-1zM207,116h1v1h-1zM207,122h1v1h-1zM215,116h1v1h-1zM215,122h1v1h-1zM223,116h1v1h-1zM223,122h1v1h-1zM231,116h1v1h-1zM231,122h1v1h-1zM239,116h1v1h-1zM239,122h1v1h-1zM247,116h1v1h-1zM247,122h1v1h-1zM255,116h1v1h-1zM255,122h1v1h-1zM263,116h1v1h-1zM263,122h1v1h-1zM271,116h1v1h-1zM271,122h1v1h-1zM279,116h1v1h-1zM279,122h1v1h-1zM287,116h1v1h-1zM287,122h1v1h-1zM295,116h1v1h-1zM295,122h1v1h-1zM303,116h1v1h-1zM303,122h1v1h-1zM311,116h1v1h-1zM311,122h1v1h-1zM319,116h1v1h-1zM319,122h1v1h-1zM327,116h1v1h-1zM327,122h1v1h-1zM335,116h1v1h-1zM335,122h1v1h-1zM343,116h1v1h-1zM343,122h1v1h-1zM351,116h1v1h-1zM351,122h1v1h-1zM359,116h1v1h-1zM359,122h1v1h-1zM367,116h1v1h-1zM367,122h1v1h-1zM375,116h1v1h-1zM375,122h1v1h-1zM383,116h1v1h-1zM383,122h1v1h-1zM391,116h1v1h-1zM391,122h1v1h-1zM399,116h1v1h-1zM399,122h1v1h-1zM407,116h1v1h-1zM407,122h1v1h-1zM415,116h1v1h-1zM415,122h1v1h-1zM423,116h1v1h-1zM423,122h1v1h-1zM431,116h1v1h-1zM431,122h1v1h-1zM439,116h1v1h-1zM439,122h1v1h-1zM447,116h1v1h-1zM447,122h1v1h-1zM455,116h1v1h-1zM455,122h1v1h-1zM463,116h1v1h-1zM463,122h1v1h-1zM471,116h1v1h-1zM471,122h1v1h-1zM479,116h1v1h-1zM479,122h1v1h-1zM487,116h1v1h-1zM487,122h1v1h-1zM495,116h1v1h-1zM495,122h1v1h-1zM503,116h1v1h-1zM503,122h1v1h-1zM511,116h1v1h-1zM511,122h1v1h-1zM519,116h1v1h-1zM519,122h1v1h-1zM527,116h1v1h-1zM527,122h1v1h-1zM535,116h1v1h-1zM535,122h1v1h-1zM543,116h1v1h-1zM543,122h1v1h-1zM551,116h1v1h-1zM551,122h1v1h-1zM559,116h1v1h-1zM559,122h1v1h-1zM567,116h1v1h-1zM567,122h1v1h-1zM575,116h1v1h-1zM575,122h1v1h-1zM583,116h1v1h-1zM583,122h1v1h-1zM591,116h1v1h-1zM591,122h1v1h-1zM599,116h1v1h-1zM599,122h1v1h-1zM607,116h1v1h-1zM607,122h1v1h-1zM615,116h1v1h-1zM615,122h1v1h-1zM623,116h1v1h-1zM623,122h1v1h-1zM631,116h1v1h-1zM631,122h1v1h-1zM639,116h1v1h-1zM639,122h1v1h-1zM647,116h1v1h-1zM647,122h1v1h-1zM655,116h1v1h-1zM655,122h1v1h-1zM663,116h1v1h-1zM663,122h1v1h-1zM671,116h1v1h-1zM671,122h1v1h-1zM679,116h1v1h-1zM679,122h1v1h-1zM687,116h1v1h-1zM687,122h1v1h-1zM695,116h1v1h-1zM695,122h1v1h-1zM703,116h1v1h-1zM703,122h1v1h-1zM711,116h1v1h-1zM711,122h1v1h-1zM719,116h1v1h-1zM719,122h1v1h-1zM727,116h1v1h-1zM727,122h1v1h-1zM735,116h1v1h-1zM735,122h1v1h-1zM743,116h1v1h-1zM743,122h1v1h-1zM751,116h1v1h-1zM751,122h1v1h-1zM759,116h1v1h-1zM759,122h1v1h-1zM767,116h1v1h-1zM767,122h1v1h-1zM775,116h1v1h-1zM775,122h1v1h-1zM783,116h1v1h-1zM783,122h1v1h-1zM791,116h1v1h-1zM791,122h1v1h-1zM799,116h1v1h-1zM799,122h1v1h-1zM807,116h1v1h-1zM807,122h1v1h-1zM815,116h1v1h-1zM815,122h1v1h-1zM823,116h1v1h-1zM823,122h1v1h-1zM831,116h1v1h-1zM831,122h1v1h-1zM839,116h1v1h-1zM839,122h1v1h-1zM847,116h1v1h-1zM847,122h1v1h-1zM855,116h1v1h-1zM855,122h1v1h-1zM863,116h1v1h-1zM863,122h1v1h-1zM871,116h1v1h-1zM871,122h1v1h-1zM879,116h1v1h-1zM879,122h1v1h-1zM887,116h1v1h-1zM887,122h1v1h-1zM895,116h1v1h-1zM895,122h1v1h-1zM903,116h1v1h-1zM903,122h1v1h-1zM911,116h1v1h-1zM911,122h1v1h-1zM919,116h1v1h-1zM919,122h1v1h-1zM927,116h1v1h-1zM927,122h1v1h-1zM935,116h1v1h-1zM935,122h1v1h-1zM943,116h1v1h-1zM943,122h1v1h-1z" fill="#0c0c78" fill-opacity="0.45"/>
<text x="99.50" y="124" fill="#0c0c78" font-size="13">PRDM16</text>
<rect x="157" y="135" width="792" height="1" fill="#0c0c78"/>
<path d="M160,133h1v1h-1zM161,134h1v3h-1zM160,137h1v1h-1zM168,133h1v1h-1zM169,134h1v3h-1zM168,137h1v1h-1zM176,133h1v1h-1zM177,134h1v3h-1zM176,137h1v1h-1zM184,133h1v1h-1zM185,134h1v3h-1zM184,137h1v1h-1zM192,133h1v1h-1zM193,134h1v3h-1zM192,137h1v1h-1zM200,133h1v1h-1zM201,134h1v3h-1zM200,137h1v1h-1zM208,133h1v1h-1zM209,134h1v3h-1zM208,137h1v1h-1zM216,133h1v1h-1zM217,134h1v3h-1zM216,137h1v1h-1zM224,133h1v1h-1zM225,134h1v3h-1zM224,137h1v1h-1zM232,133h1v1h-1zM233,134h1v3h-1zM232,137h1v1h-1zM240,133h1v1h-1zM241,134h1v3h-1zM240,137h1v1h-1zM248,133h1v1h-1zM249,134h1v3h-1zM248,137h1v1h-1zM256,133h1v1h-1zM257,134h1v3h-1zM256,137h1v1h-1zM264,133h1v1h-1zM265,134h1v3h-1zM264,137h1v1h-1zM272,133h1v1h-1zM273,134h1v3h-1zM272,137h1v1h-1zM280,133h1v1h-1zM281,134h1v3h-1zM280,137h1v1h-1zM288,133h1v1h-1zM289,134h1v3h-1zM288,137h1v1h-1zM296,133h1v1h-1zM297,134h1v3h-1zM296,137h1v1h-1zM304,133h1v1h-1zM305,134h1v3h-1zM304,137h1v1h-1zM312,133h1v1h-1zM313,134h1v3h-1zM312,137h1v1h-1zM320,133h1v1h-1zM321,134h1v3h-1zM320,137h1v1h-1zM328,133h1v1h-1zM329,134h1v3h-1zM328,137h1v1h-1zM336,133h1v1h-1zM337,134h1v3h-1zM336,137h1v1h-1zM344,133h1v1h-1zM345,134h1v3h-1zM344,137h1v1h-1zM352,133h1v1h-1zM353,134h1v3h-1zM352,137h1v1h-1zM360,133h1v1h-1zM361,134h1v3h-1zM360,137h1v1h-1zM368,133h1v1h-1zM369,134h1v3h-1zM368,137h1v1h-1zM376,133h1v1h-1zM377,134h1v3h-1zM376,137h1v1h-1zM384,133h1v1h-1zM385,134h1v3h-1zM384,137h1v1h-1zM392,133h1v1h-1zM393,134h1v3h-1zM392,137h1v1h-1zM400,133h1v1h-1zM401,134h1v3h-1zM400,137h1v1h-1zM408,133h1v1h-1zM409,134h1v3h-1zM408,137h1v1h-1zM416,133h1v1h-1zM417,134h1v3h-1zM416,137h1v1h-1zM424,133h1v1h-1zM425,134h1v3h-1zM424,137h1v1h-1zM432,133h1v1h-1zM433,134h1v3h-1zM432,137h1v1h-1zM440,133h1v1h-1zM441,134h1v3h-1zM440,137h1v1h-1zM448,133h1v1h-1zM449,134h1v3h-1zM448,137h1v1h-1zM456,133h1v1h-1zM457,134h1v3h-1zM456,137h1v1h-1zM464,133h1v1h-1zM465,134h1v3h-1zM464,137h1v1h-1zM472,133h1v1h-1zM473,134h1v3h-1zM472,137h1v1h-1zM480,133h1v1h-1zM481,134h1v3h-1zM480,137h1v1h-1zM488,133h1v1h-1zM489,134h1v3h-1zM488,137h1v1h-1zM496,133h1v1h-1zM497,134h1v3h-1zM496,137h1v1h-1zM504,133h1v1h-1zM505,134h1v3h-1zM504,137h1v1h-1zM512,133h1v1h-1zM513,134h1v3h-1zM512,137h1v1h-1zM520,133h1v1h-1zM521,134h1v3h-1zM520,137h1v1h-1zM528,133h1v1h-1zM529,134h1v3h-1zM528,137h1v1h-1zM536,133h1v1h-1zM537,134h1v3h-1zM536,137h1v1h-1zM544,133h1v1h-1zM545,134h1v3h-1zM544,137h1v1h-1zM552,133h1v1h-1zM553,134h1v3h-1zM552,137h1v1h-1zM560,133h1v1h-1zM561,134h1v3h-1zM560,137h1v1h-1zM568,133h1v1h-1zM569,134h1v3h-1zM568,137h1v1h-1zM576,133h1v1h-1zM577,134h1v3h-1zM576,137h1v1h-1zM584,133h1v1h-1zM585,134h1v3h-1zM584,137h1v1h-1zM592,133h1v1h-1zM593,134h1v3h-1zM592,137h1v1h-1zM600,133h1v1h-1zM601,134h1v3h-1zM600,137h1v1h-1zM608,133h1v1h-1zM609,134h1v3h-1zM608,137h1v1h-1zM616,133h1v1h-1zM617,134h1v3h-1zM616,137h1v1h-1zM624,133h1v1h-1zM625,134h1v3h-1zM624,137h1v1h-1zM632,133h1v1h-1zM633,134h1v3h-1zM632,137h1v1h-1zM640,133h1v1h-1zM641,134h1v3h-1zM640,137h1v1h-1zM648,133h1v1h-1zM649,134h1v3h-1zM648,137h1v1h-1zM656,133h1v1h-1zM657,134h1v3h-1zM656,137h1v1h-1zM664,133h1v1h-1zM665,134h1v3h-1zM664,137h1v1h-1zM672,133h1v1h-1zM673,134h1v3h-1zM672,137h1v1h-1zM680,133h1v1h-1zM681,134h1v3h-1zM680,137h1v1h-1zM688,133h1v1h-1zM689,134h1v3h-1zM688,137h1v1h-1zM696,133h1v1h-1zM697,134h1v3h-1zM696,137h1v1h-1zM704,133h1v1h-1zM705,134h1v3h-1zM704,137h1v1h-1zM712,133h1v1h-1zM713,134h1v3h-1zM712,137h1v1h-1zM720,133h1v1h-1zM721,134h1v3h-1zM720,137h1v1h-1zM728,133h1v1h-1zM729,134h1v3h-1zM728,137h1v1h-1zM736,133h1v1h-1zM737,134h1v3h-1zM736,137h1v1h-1zM744,133h1v1h-1zM745,134h1v3h-1zM744,137h1v1h-1zM752,133h1v1h-1zM753,134h1v3h-1zM752,137h1v1h-1zM760,133h1v1h-1zM761,134h1v3h-1zM760,137h1v1h-1zM768,133h1v1h-1zM769,134h1v3h-1zM768,137h1v1h-1zM776,133h1v1h-1zM777,134h1v3h-1zM776,137h1v1h-1zM784,133h1v1h-1zM785,134h1v3h-1zM784,137h1v1h-1zM792,133h1v1h-1zM793,134h1v3h-1zM792,137h1v1h-1zM800,133h1v1h-1zM801,134h1v3h-1zM800,137h1v1h-1zM808,133h1v1h-1zM809,134h1v3h-1zM808,137h1v1h-1zM816,133h1v1h-1zM817,134h1v3h-1zM816,137h1v1h-1zM824,133h1v1h-1zM825,134h1v3h-1zM824,137h1v1h-1zM832,133h1v1h-1zM833,134h1v3h-1zM832,137h1v1h-1zM840,133h1v1h-1zM841,134h1v3h-1zM840,137h1v1h-1zM848,133h1v1h-1zM849,134h1v3h-1zM848,137h1v1h-1zM856,133h1v1h-1zM857,134h1v3h-1zM856,137h1v1h-1zM864,133h1v1h-1zM865,134h1v3h-1zM864,137h1v1h-1zM872,133h1v1h-1zM873,134h1v3h-1zM872,137h1v1h-1zM880,133h1v1h-1zM881,134h1v3h-1zM880,137h1v1h-1zM888,133h1v1h-1zM889,134h1v3h-1zM888,137h1v1h-1zM896,133h1v1h-1zM897,134h1v3h-1zM896,137h1v1h-1zM904,133h1v1h-1zM905,134h1v3h-1zM904,137h1v1h-1zM912,133h1v1h-1zM913,134h1v3h-1zM912,137h1v1h-1zM920,133h1v1h-1zM921,134h1v3h-1zM920,137h1v1h-1zM928,133h1v1h-1zM929,134h1v3h-1zM928,137h1v1h-1zM936,133h1v1h-1zM937,134h1v3h-1zM936,137h1v1h-1zM944,133h1v1h-1zM945,134h1v3h-1zM944,137h1v1h-1z" fill="#0c0c78"/>
<path d="M159,132h1v1h-1zM159,138h1v1h-1zM167,132h1v1h-1zM167,138h1v1h-1zM175,132h1v1h-1zM175,138h1v1h-1zM183,132h1v1h-1zM183,138h1v1h-1zM191,132h1v1h-1zM191,138h1v1h-1zM199,132h1v1h-1zM199,138h1v1h-1zM207,132h1v1h-1zM207,138h1v1h-1zM215,132h1v1h-1zM215,138h1v1h-1zM223,132h1v1h-1zM223,138h1v1h-1zM231,132h1v1h-1zM231,138h1v1h-1zM239,132h1v1h-1zM239,138h1v1h-1zM247,132h1v1h-1zM247,138h1v1h-1zM255,132h1v1h-1zM255,138h1v1h-1zM263,132h1v1h-1zM263,138h1v1h-1zM271,132h1v1h-1zM271,138h1v1h-1zM279,132h1v1h-1zM279,138h1v1h-1zM287,132h1v1h-1zM287,138h1v1h-1zM295,132h1v1h-1zM295,138h1v1h-1zM303,132h1v1h-1zM303,138h1v1h-1zM311,132h1v1h-1zM311,138h1v1h-1zM319,132h1v1h-1zM319,138h1v1h-1zM327,132h1v1h-1zM327,138h1v1h-1zM335,132h1v1h-1zM335,138h1v1h-1zM343,132h1v1h-1zM343,138h1v1h-1zM351,132h1v1h-1zM351,138h1v1h-1zM359,132h1v1h-1zM359,138h1v1h-1zM367,132h1v1h-1zM367,138h1v1h-1zM375,132h1v1h-1zM375,138h1v1h-1zM383,132h1v1h-1zM383,138h1v1h-1zM391,132h1v1h-1zM391,138h1v1h-1zM399,132h1v1h-1zM399,138h1v1h-1zM407,132h1v1h-1zM407,138h1v1h-1zM415,132h1v1h-1zM415,138h1v1h-1zM423,132h1v1h-1zM423,138h1v1h-1zM431,132h1v1h-1zM431,138h1v1h-1zM439,132h1v1h-1zM439,138h1v1h-1zM447,132h1v1h-1zM447,138h1v1h-1zM455,132h1v1h-1zM455,138h1v1h-1zM463,132h1v1h-1zM463,138h1v1h-1zM471,132h1v1h-1zM471,138h1v1h-1zM479,132h1v1h-1zM479,138h1v1h-1zM487,132h1v1h-1zM487,138h1v1h-1zM495,132h1v1h-1zM495,138h1v1h-1zM503,132h1v1h-1zM503,138h1v1h-1zM511,132h1v1h-1zM511,138h1v1h-1zM519,132h1v1h-1zM519,138h1v1h-1zM527,132h1v1h-1zM527,138h1v1h-1zM535,132h1v1h-1zM535,138h1v1h-1zM543,132h1v1h-1zM543,138h1v1h-1zM551,132h1v1h-1zM551,138h1v1h-1zM559,132h1v1h-1zM559,138h1v1h-1zM567,132h1v1h-1zM567,138h1v1h-1zM575,132h1v1h-1zM575,138h1v1h-1zM583,132h1v1h-1zM583,138h1v1h-1zM591,132h1v1h-1zM591,138h1v1h-1zM599,132h1v1h-1zM599,138h1v1h-1zM607,132h1v1h-1zM607,138h1v1h-1zM615,132h1v1h-1zM615,138h1v1h-1zM623,132h1v1h-1zM623,138h1v1h-1zM631,132h1v1h-1zM631,138h1v1h-1zM639,132h1v1h-1zM639,138h1v1h-1zM647,132h1v1h-1zM647,138h1v1h-1zM655,132h1v1h-1zM655,138h1v1h-1zM663,132h1v1h-1zM663,138h1v1h-1zM671,132h1v1h-1zM671,138h1v1h-1zM679,132h1v1h-1zM679,138h1v1h-1zM687,132h1v1h-1zM687,138h1v1h-1zM695,132h1v1h-1zM695,138h1v1h-1zM703,132h1v1h-1zM703,138h1v1h-1zM711,132h1v1h-1zM711,138h1v1h-1zM719,132h1v1h-1zM719,138h1v1h-1zM727,132h1v1h-1zM727,138h1v1h-1zM735,132h1v1h-1zM735,138h1v1h-1zM743,132h1v1h-1zM743,138h1v1h-1zM751,132h1v1h-1zM751,138h1v1h-1zM759,132h1v1h-1zM759,138h1v1h-1zM767,132h1v1h-1zM767,138h1v1h-1zM775,132h1v1h-1zM775,138h1v1h-1zM783,132h1v1h-1zM783,138h1v1h-1zM791,132h1v1h-1zM791,138h1v1h-1zM799,132h1v1h-1zM799,138h1v1h-1zM807,132h1v1h-1zM807,138h1v1h-1zM815,132h1v1h-1zM815,138h1v1h-1zM823,132h1v1h-1zM823,138h1v1h-1zM831,132h1v1h-1zM831,138h1v1h-1zM839,132h1v1h-1zM839,138h1v1h-1zM847,132h1v1h-1zM847,138h1v1h-1zM855,132h1v1h-1zM855,138h1v1h-1zM863,132h1v1h-1zM863,138h1v1h-1zM871,132h1v1h-1zM871,138h1v1h-1zM879,132h1v1h-1zM879,138h1v1h-1zM887,132h1v1h-1zM887,138h1v1h-1zM895,132h1v1h-1zM895,138h1v1h-1zM903,132h1v1h-1zM903,138h1v1h-1zM911,132h1v1h-1zM911,138h1v1h-1zM919,132h1v1h-1zM919,138h1v1h-1zM927,132h1v1h-1zM927,138h1v1h-1zM935,132h1v1h-1zM935,138h1v1h-1zM943,132h1v1h-1zM943,138h1v1h-1z" fill="#0c0c78" fill-opacity="0.45"/>
<text x="99.50" y="140" fill="#0c0c78" font-size="13">PRDM16</text>
<text x="490.80" y="156" fill="#000" font-size="11" textLength="123.72" lengthAdjust="spacingAndGlyphs">RefSeq genes from NCBI</text>
<rect x="157" y="166" width="792" height="1" fill="#0c0c78"/>
<text x="59.60" y="171" fill="#0c0c78" font-size="13" textLength="93.13" lengthAdjust="spacingAndGlyphs">RefSeq Curated</text>
<text x="444.81" y="187" fill="#000" font-size="11" textLength="214.85" lengthAdjust="spacingAndGlyphs">Publications: Sequences in Scientific Articles</text>
<text x="86.50" y="202" fill="#000" font-size="13">Sequences</text>
<text x="118.50" y="218" fill="#000" font-size="13">SNPs</text>
<text x="367.50" y="235" fill="#005500" font-size="13" textLength="369.62" lengthAdjust="spacingAndGlyphs">OMIM Gene Phenotypes - Dark Green Can Be Disease-causing</text>
<rect x="156" y="237" width="793" height="15" fill="#005000"/>
<text x="74.50" y="249" fill="#005500" font-size="13">OMIM Genes</text>
<text x="435.50" y="265" fill="#000" font-size="11" textLength="232.17" lengthAdjust="spacingAndGlyphs">Short Genetic Variants from dbSNP release 155</text>
<rect x="516" y="268" width="73" height="15" fill="#000"/>
<text x="25.10" y="280" fill="#000" font-size="13" textLength="127.28" lengthAdjust="spacingAndGlyphs">Common dbSNP(155)</text>
<text x="264.99" y="297" fill="#000" font-size="13" textLength="572.96" lengthAdjust="spacingAndGlyphs">Gene Expression in 54 tissues from GTEx RNA-seq of 17382 samples, 948 donors (V8, Aug 2019)</text>
<rect x="156.5" y="300.5" width="377" height="46" fill="#fff" stroke="#f2f2f2" stroke-width="1"/>
<rect x="156" y="331" width="5" height="15" fill="#FFA54F"/>
<rect x="163" y="335" width="5" height="11" fill="#EE9A00"/>
<rect x="170" y="343" width="5" height="3" fill="#8FBC8F"/>
<rect x="177" y="300" width="5" height="46" fill="#8B1C62"/>
<rect x="184" y="305" width="5" height="41" fill="#EE6A50"/>
<rect x="191" y="302" width="5" height="44" fill="#FF0000"/>
<rect x="198" y="334" width="5" height="12" fill="#CDB79E"/>
<rect x="205" y="327" width="5" height="19" fill="#EEEE00"/>
<rect x="212" y="326" width="5" height="20" fill="#EEEE00"/>
<rect x="219" y="325" width="5" height="21" fill="#EEEE00"/>
<rect x="226" y="344" width="5" height="2" fill="#EEEE00"/>
<rect x="233" y="343" width="5" height="3" fill="#EEEE00"/>
<rect x="240" y="324" width="5" height="22" fill="#EEEE00"/>
<rect x="247" y="326" width="5" height="20" fill="#EEEE00"/>
<rect x="254" y="332" width="5" height="14" fill="#EEEE00"/>
<rect x="261" y="335" width="5" height="11" fill="#EEEE00"/>
<rect x="268" y="327" width="5" height="19" fill="#EEEE00"/>
<rect x="275" y="328" width="5" height="18" fill="#EEEE00"/>
<rect x="282" y="332" width="5" height="14" fill="#EEEE00"/>
<rect x="289" y="334" width="5" height="12" fill="#EEEE00"/>
<rect x="296" y="333" width="5" height="13" fill="#00CDCD"/>
<rect x="310" y="345" width="5" height="1" fill="#9AC0CD"/>
<rect x="317" y="330" width="5" height="16" fill="#EED5D2"/>
<rect x="324" y="330" width="5" height="16" fill="#EED5D2"/>
<rect x="331" y="334" width="5" height="12" fill="#CDB79E"/>
<rect x="338" y="337" width="5" height="9" fill="#EEC591"/>
<rect x="345" y="329" width="5" height="17" fill="#8B7355"/>
<rect x="352" y="341" width="5" height="5" fill="#8B7355"/>
<rect x="359" y="332" width="5" height="14" fill="#CDAA7D"/>
<rect x="366" y="328" width="5" height="18" fill="#EED5D2"/>
<rect x="373" y="337" width="5" height="9" fill="#B452CD"/>
<rect x="380" y="328" width="5" height="18" fill="#7A378B"/>
<rect x="387" y="328" width="5" height="18" fill="#CDB79E"/>
<rect x="394" y="318" width="5" height="28" fill="#CDB79E"/>
<rect x="401" y="345" width="5" height="1" fill="#CDB79E"/>
<rect x="408" y="323" width="5" height="23" fill="#9ACD32"/>
<rect x="415" y="341" width="5" height="5" fill="#CDB79E"/>
<rect x="422" y="344" width="5" height="2" fill="#7A67EE"/>
<rect x="429" y="307" width="5" height="39" fill="#FFD700"/>
<rect x="436" y="330" width="5" height="16" fill="#FFB6C1"/>
<rect x="443" y="326" width="5" height="20" fill="#CD9B1D"/>
<rect x="450" y="343" width="5" height="3" fill="#B4EEB4"/>
<rect x="457" y="337" width="5" height="9" fill="#D9D9D9"/>
<rect x="464" y="341" width="5" height="5" fill="#3A5FCD"/>
<rect x="471" y="339" width="5" height="7" fill="#1E90FF"/>
<rect x="478" y="336" width="5" height="10" fill="#CDB79E"/>
<rect x="485" y="338" width="5" height="8" fill="#CDB79E"/>
<rect x="492" y="313" width="5" height="33" fill="#FFD39B"/>
<rect x="499" y="334" width="5" height="12" fill="#A6A6A6"/>
<rect x="506" y="308" width="5" height="38" fill="#008B45"/>
<rect x="513" y="333" width="5" height="13" fill="#EED5D2"/>
<rect x="520" y="335" width="5" height="11" fill="#EED5D2"/>
<rect x="156" y="347" width="793" height="2" fill="#000080"/>
<text x="99.50" y="330" fill="#000" font-size="13">PRDM16</text>
<text x="280.59" y="364" fill="#000" font-size="13" textLength="541.96" lengthAdjust="spacingAndGlyphs">H3K27Ac Mark (Often Found Near Active Regulatory Elements) on 7 cell lines from ENCODE</text>
<text x="12.50" y="378" fill="#000" font-size="13" textLength="105.01" lengthAdjust="spacingAndGlyphs">Layered H3K27Ac</text>
<rect x="156" y="395" width="793" height="1" fill="#ffd080"/>
<text x="405.19" y="410" fill="#3f3f90" font-size="13" textLength="293.65" lengthAdjust="spacingAndGlyphs">100 vertebrates Basewise Conservation by PhyloP</text>
<text x="115.90" y="409" fill="#3f3f90" font-size="13" textLength="36.66" lengthAdjust="spacingAndGlyphs">4.88 _</text>
<text x="12.50" y="434" fill="#3f3f90" font-size="13">100 Vert. Cons</text>
<text x="118.16" y="459" fill="#8b3a3a" font-size="13" textLength="34.50" lengthAdjust="spacingAndGlyphs">-4.5 _</text>
<text transform="matrix(0.6615,0,0,0.0254,239.69,436.77)" font-size="100" fill="#0000ff">G</text>
<text transform="matrix(0.6615,0,0,0.1549,311.69,436.85)" font-size="100" fill="#0000ff">G</text>
<text transform="matrix(0.6212,0,0,0.0725,385.00,443.00)" font-size="100" fill="#ff0000">A</text>
<text transform="matrix(0.6769,0,0,0.0211,382.62,444.48)" font-size="100" fill="#0000ff">G</text>
<text transform="matrix(0.6508,0,0,0.0915,455.75,444.41)" font-size="100" fill="#a89a00">C</text>
<text transform="matrix(0.6667,0,0,0.0870,455.67,451.00)" font-size="100" fill="#00e000">T</text>
<text transform="matrix(0.6667,0,0,0.0211,600.67,438.98)" font-size="100" fill="#a89a00">C</text>
<text transform="matrix(0.6462,0,0,0.0141,600.77,439.99)" font-size="100" fill="#0000ff">G</text>
<text transform="matrix(0.6508,0,0,0.0704,671.75,435.93)" font-size="100" fill="#a89a00">C</text>
<text transform="matrix(0.6667,0,0,0.0217,671.67,437.50)" font-size="100" fill="#00e000">T</text>
<text transform="matrix(0.6508,0,0,0.0704,743.75,436.93)" font-size="100" fill="#a89a00">C</text>
<text transform="matrix(0.6508,0,0,0.1127,815.75,436.89)" font-size="100" fill="#a89a00">C</text>
<text transform="matrix(0.6349,0,0,0.0211,887.83,437.48)" font-size="100" fill="#a89a00">C</text>
<text x="444.28" y="476" fill="#0c0c78" font-size="13" textLength="214.73" lengthAdjust="spacingAndGlyphs">Multiz Alignments of 100 Vertebrates</text>
<text x="120.50" y="490" fill="#e08a1e" font-size="13">Gaps</text>
<text x="224.00" y="490" fill="#e08a1e" font-size="13">5</text>
<text x="512.00" y="490" fill="#e08a1e" font-size="13">1</text>
<text x="110.50" y="505" fill="#0c0c78" font-size="13">Human</text>
<text x="186.10" y="505" fill="#0c0c78" font-size="13" transform="matrix(1,0,0,1.11,0,-55.55)">T</text>
<text x="257.10" y="505" fill="#0c0c78" font-size="13" transform="matrix(1,0,0,1.11,0,-55.55)">G</text>
<text x="329.10" y="505" fill="#0c0c78" font-size="13" transform="matrix(1,0,0,1.11,0,-55.55)">G</text>
<text x="401.60" y="505" fill="#0c0c78" font-size="13" transform="matrix(1,0,0,1.11,0,-55.55)">A</text>
<text x="473.60" y="505" fill="#0c0c78" font-size="13" transform="matrix(1,0,0,1.11,0,-55.55)">C</text>
<text x="545.60" y="505" fill="#0c0c78" font-size="13" transform="matrix(1,0,0,1.11,0,-55.55)">A</text>
<text x="617.10" y="505" fill="#0c0c78" font-size="13" transform="matrix(1,0,0,1.11,0,-55.55)">G</text>
<text x="689.60" y="505" fill="#0c0c78" font-size="13" transform="matrix(1,0,0,1.11,0,-55.55)">C</text>
<text x="761.60" y="505" fill="#0c0c78" font-size="13" transform="matrix(1,0,0,1.11,0,-55.55)">C</text>
<text x="833.60" y="505" fill="#0c0c78" font-size="13" transform="matrix(1,0,0,1.11,0,-55.55)">C</text>
<text x="905.60" y="505" fill="#0c0c78" font-size="13" transform="matrix(1,0,0,1.11,0,-55.55)">C</text>
<text x="107.50" y="520" fill="#0c0c78" font-size="13">Rhesus</text>
<text x="186.10" y="520" fill="#0c0c78" font-size="13" transform="matrix(1,0,0,1.11,0,-57.20)">T</text>
<text x="257.10" y="520" fill="#0c0c78" font-size="13" transform="matrix(1,0,0,1.11,0,-57.20)">G</text>
<text x="329.10" y="520" fill="#0c0c78" font-size="13" transform="matrix(1,0,0,1.11,0,-57.20)">G</text>
<text x="401.60" y="520" fill="#0c0c78" font-size="13" transform="matrix(1,0,0,1.11,0,-57.20)">A</text>
<text x="473.60" y="520" fill="#0c0c78" font-size="13" transform="matrix(1,0,0,1.11,0,-57.20)">C</text>
<text x="545.10" y="520" fill="#8080b0" font-size="13" transform="matrix(1,0,0,1.11,0,-57.20)">G</text>
<text x="617.10" y="520" fill="#0c0c78" font-size="13" transform="matrix(1,0,0,1.11,0,-57.20)">G</text>
<text x="689.60" y="520" fill="#0c0c78" font-size="13" transform="matrix(1,0,0,1.11,0,-57.20)">C</text>
<text x="761.60" y="520" fill="#0c0c78" font-size="13" transform="matrix(1,0,0,1.11,0,-57.20)">C</text>
<text x="833.60" y="520" fill="#0c0c78" font-size="13" transform="matrix(1,0,0,1.11,0,-57.20)">C</text>
<text x="905.60" y="520" fill="#0c0c78" font-size="13" transform="matrix(1,0,0,1.11,0,-57.20)">C</text>
<text x="113.50" y="535" fill="#005500" font-size="13">Mouse</text>
<text x="186.10" y="535" fill="#0c0c78" font-size="13" transform="matrix(1,0,0,1.11,0,-58.85)">T</text>
<text x="257.10" y="535" fill="#0c0c78" font-size="13" transform="matrix(1,0,0,1.11,0,-58.85)">G</text>
<text x="329.10" y="535" fill="#0c0c78" font-size="13" transform="matrix(1,0,0,1.11,0,-58.85)">G</text>
<text x="401.60" y="535" fill="#0c0c78" font-size="13" transform="matrix(1,0,0,1.11,0,-58.85)">A</text>
<text x="474.10" y="535" fill="#8080b0" font-size="13" transform="matrix(1,0,0,1.11,0,-58.85)">T</text>
<text x="545.10" y="535" fill="#8080b0" font-size="13" transform="matrix(1,0,0,1.11,0,-58.85)">G</text>
<text x="618.10" y="535" fill="#8080b0" font-size="13" transform="matrix(1,0,0,1.11,0,-58.85)">T</text>
<text x="690.10" y="535" fill="#8080b0" font-size="13" transform="matrix(1,0,0,1.11,0,-58.85)">T</text>
<text x="761.60" y="535" fill="#0c0c78" font-size="13" transform="matrix(1,0,0,1.11,0,-58.85)">C</text>
<text x="833.60" y="535" fill="#0c0c78" font-size="13" transform="matrix(1,0,0,1.11,0,-58.85)">C</text>
<text x="905.60" y="535" fill="#0c0c78" font-size="13" transform="matrix(1,0,0,1.11,0,-58.85)">C</text>
<text x="128.50" y="550" fill="#0c0c78" font-size="13">Dog</text>
<text x="186.10" y="550" fill="#0c0c78" font-size="13" transform="matrix(1,0,0,1.11,0,-60.50)">T</text>
<text x="257.10" y="550" fill="#0c0c78" font-size="13" transform="matrix(1,0,0,1.11,0,-60.50)">G</text>
<text x="329.10" y="550" fill="#0c0c78" font-size="13" transform="matrix(1,0,0,1.11,0,-60.50)">G</text>
<text x="401.60" y="550" fill="#0c0c78" font-size="13" transform="matrix(1,0,0,1.11,0,-60.50)">A</text>
<text x="473.60" y="550" fill="#0c0c78" font-size="13" transform="matrix(1,0,0,1.11,0,-60.50)">C</text>
<text x="545.10" y="550" fill="#8080b0" font-size="13" transform="matrix(1,0,0,1.11,0,-60.50)">G</text>
<text x="617.60" y="550" fill="#8080b0" font-size="13" transform="matrix(1,0,0,1.11,0,-60.50)">C</text>
<text x="689.60" y="550" fill="#0c0c78" font-size="13" transform="matrix(1,0,0,1.11,0,-60.50)">C</text>
<text x="761.60" y="550" fill="#0c0c78" font-size="13" transform="matrix(1,0,0,1.11,0,-60.50)">C</text>
<text x="833.60" y="550" fill="#0c0c78" font-size="13" transform="matrix(1,0,0,1.11,0,-60.50)">C</text>
<text x="905.60" y="550" fill="#0c0c78" font-size="13" transform="matrix(1,0,0,1.11,0,-60.50)">C</text>
<text x="100.50" y="565" fill="#005500" font-size="13">Elephant</text>
<text x="185.60" y="565" fill="#8080b0" font-size="13" transform="matrix(1,0,0,1.11,0,-62.15)">C</text>
<text x="257.60" y="565" fill="#8080b0" font-size="13" transform="matrix(1,0,0,1.11,0,-62.15)">A</text>
<text x="329.10" y="565" fill="#0c0c78" font-size="13" transform="matrix(1,0,0,1.11,0,-62.15)">G</text>
<text x="401.60" y="565" fill="#0c0c78" font-size="13" transform="matrix(1,0,0,1.11,0,-62.15)">A</text>
<text x="473.60" y="565" fill="#8080b0" font-size="13" transform="matrix(1,0,0,1.11,0,-62.15)">A</text>
<text x="545.10" y="565" fill="#8080b0" font-size="13" transform="matrix(1,0,0,1.11,0,-62.15)">G</text>
<text x="617.60" y="565" fill="#8080b0" font-size="13" transform="matrix(1,0,0,1.11,0,-62.15)">C</text>
<text x="689.60" y="565" fill="#0c0c78" font-size="13" transform="matrix(1,0,0,1.11,0,-62.15)">C</text>
<text x="761.60" y="565" fill="#0c0c78" font-size="13" transform="matrix(1,0,0,1.11,0,-62.15)">C</text>
<text x="833.60" y="565" fill="#0c0c78" font-size="13" transform="matrix(1,0,0,1.11,0,-62.15)">C</text>
<text x="905.60" y="565" fill="#0c0c78" font-size="13" transform="matrix(1,0,0,1.11,0,-62.15)">C</text>
<text x="105.50" y="580" fill="#005500" font-size="13">Chicken</text>
<text x="187.60" y="580" fill="#8080b0" font-size="13">-</text>
<text x="257.10" y="580" fill="#0c0c78" font-size="13" transform="matrix(1,0,0,1.11,0,-63.80)">G</text>
<text x="329.60" y="580" fill="#8080b0" font-size="13" transform="matrix(1,0,0,1.11,0,-63.80)">C</text>
<text x="402.10" y="580" fill="#8080b0" font-size="13" transform="matrix(1,0,0,1.11,0,-63.80)">T</text>
<text x="473.10" y="580" fill="#8080b0" font-size="13" transform="matrix(1,0,0,1.11,0,-63.80)">G</text>
<text x="546.10" y="580" fill="#8080b0" font-size="13" transform="matrix(1,0,0,1.11,0,-63.80)">T</text>
<text x="617.10" y="580" fill="#0c0c78" font-size="13" transform="matrix(1,0,0,1.11,0,-63.80)">G</text>
<text x="689.60" y="580" fill="#0c0c78" font-size="13" transform="matrix(1,0,0,1.11,0,-63.80)">C</text>
<text x="761.60" y="580" fill="#0c0c78" font-size="13" transform="matrix(1,0,0,1.11,0,-63.80)">C</text>
<text x="833.60" y="580" fill="#0c0c78" font-size="13" transform="matrix(1,0,0,1.11,0,-63.80)">C</text>
<text x="905.10" y="580" fill="#8080b0" font-size="13" transform="matrix(1,0,0,1.11,0,-63.80)">G</text>
<text x="84.50" y="595" fill="#0c0c78" font-size="13">X_tropicalis</text>
<text x="186.10" y="595" fill="#8080b0" font-size="13">=</text>
<text x="258.10" y="595" fill="#8080b0" font-size="13">=</text>
<text x="330.10" y="595" fill="#8080b0" font-size="13">=</text>
<text x="402.10" y="595" fill="#8080b0" font-size="13">=</text>
<text x="474.10" y="595" fill="#8080b0" font-size="13">=</text>
<text x="546.10" y="595" fill="#8080b0" font-size="13">=</text>
<text x="618.10" y="595" fill="#8080b0" font-size="13">=</text>
<text x="690.10" y="595" fill="#8080b0" font-size="13">=</text>
<text x="762.10" y="595" fill="#8080b0" font-size="13">=</text>
<text x="834.10" y="595" fill="#8080b0" font-size="13">=</text>
<text x="906.10" y="595" fill="#8080b0" font-size="13">=</text>
<text x="98.50" y="610" fill="#005500" font-size="13">Zebrafish</text>
<text x="186.10" y="610" fill="#8080b0" font-size="13">=</text>
<text x="258.10" y="610" fill="#8080b0" font-size="13">=</text>
<text x="330.10" y="610" fill="#8080b0" font-size="13">=</text>
<text x="402.10" y="610" fill="#8080b0" font-size="13">=</text>
<text x="474.10" y="610" fill="#8080b0" font-size="13">=</text>
<text x="546.10" y="610" fill="#8080b0" font-size="13">=</text>
<text x="618.10" y="610" fill="#8080b0" font-size="13">=</text>
<text x="690.10" y="610" fill="#8080b0" font-size="13">=</text>
<text x="762.10" y="610" fill="#8080b0" font-size="13">=</text>
<text x="834.10" y="610" fill="#8080b0" font-size="13">=</text>
<text x="906.10" y="610" fill="#8080b0" font-size="13">=</text>
<rect x="228" y="522" width="1" height="14" fill="#e08a1e"/>
<rect x="228" y="537" width="1" height="14" fill="#e08a1e"/>
<rect x="228" y="567" width="1" height="14" fill="#e08a1e"/>
<rect x="516" y="522" width="1" height="14" fill="#e08a1e"/>
<text x="440.80" y="626" fill="#000" font-size="13" textLength="223.47" lengthAdjust="spacingAndGlyphs">Repeating Elements by RepeatMasker</text>
<text x="67.90" y="640" fill="#000" font-size="13" textLength="84.24" lengthAdjust="spacingAndGlyphs">RepeatMasker</text>
</svg></body></html>
